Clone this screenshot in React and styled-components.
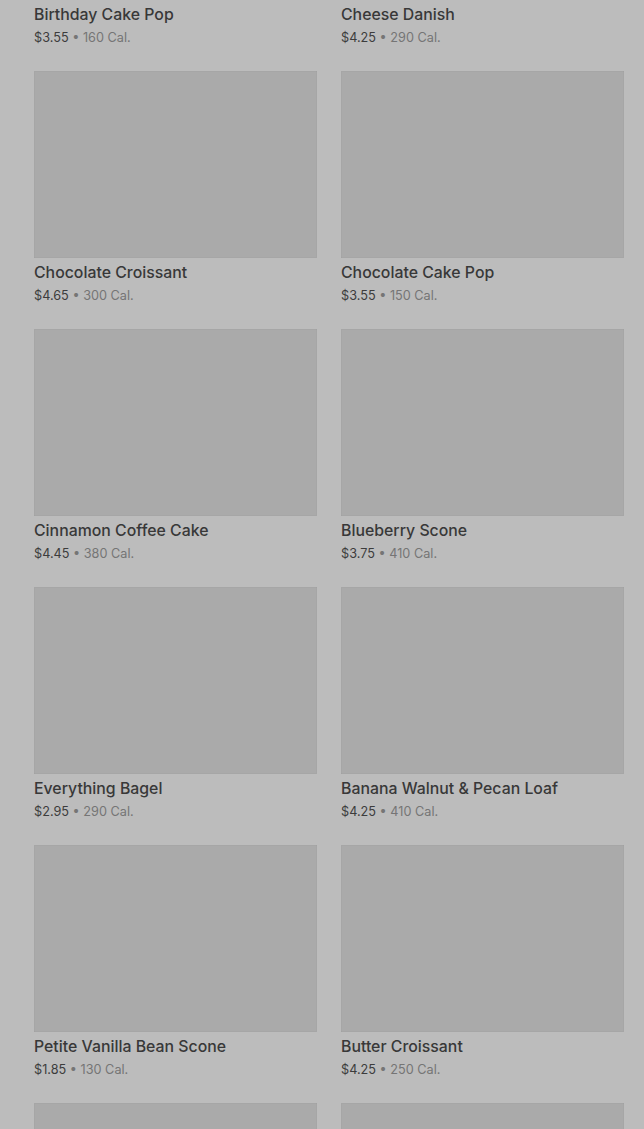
import React from "react";
import styled, { createGlobalStyle } from "styled-components";

const GlobalStyle = createGlobalStyle`
  html, body {
    margin: 0;
    padding: 0;
    background: #bcbcbc;
    font-family: Inter, "Noto Sans", sans-serif;
    overflow: hidden;
  }
`;

const Page = styled.div`
  width: 644px;
  height: 1129px;
  overflow: hidden;
  background: #bcbcbc;
`;

const Grid = styled.div`
  display: grid;
  grid-template-columns: 283px 283px;
  column-gap: 24px;
  row-gap: 24px;
  padding: 0 20px 0 34px;
  margin-top: -187px;
`;

const Card = styled.div`
  display: flex;
  flex-direction: column;
`;

const Thumb = styled.div`
  height: 187px;
  background: #aaaaaa;
  box-shadow: inset 1px 1px 0 rgba(0, 0, 0, 0.02),
    inset -1px -1px 0 rgba(0, 0, 0, 0.02);
`;

const Name = styled.div`
  margin-top: 5px;
  font-size: 15.85px;
  font-weight: 500;
  line-height: 20px;
  color: #383838;
`;

const Meta = styled.div`
  margin-top: 4px;
  font-size: 12.7px;
  line-height: 18px;
  color: #3c3c3c;
`;

const Cal = styled.span`
  color: #757575;
`;

const items = [
  ["Birthday Cake Pop", "$3.55", "160"],
  ["Cheese Danish", "$4.25", "290"],
  ["Chocolate Croissant", "$4.65", "300"],
  ["Chocolate Cake Pop", "$3.55", "150"],
  ["Cinnamon Coffee Cake", "$4.45", "380"],
  ["Blueberry Scone", "$3.75", "410"],
  ["Everything Bagel", "$2.95", "290"],
  ["Banana Walnut & Pecan Loaf", "$4.25", "410"],
  ["Petite Vanilla Bean Scone", "$1.85", "130"],
  ["Butter Croissant", "$4.25", "250"],
  ["", "", ""],
  ["", "", ""],
];

const App = () => {
  return (
    <Page>
      <GlobalStyle />
      <Grid>
        {items.map(([name, price, cal], i) => (
          <Card key={i}>
            <Thumb />
            {name && <Name>{name}</Name>}
            {name && (
              <Meta>
                {price} <Cal>• {cal} Cal.</Cal>
              </Meta>
            )}
          </Card>
        ))}
      </Grid>
    </Page>
  );
};

export default App;
